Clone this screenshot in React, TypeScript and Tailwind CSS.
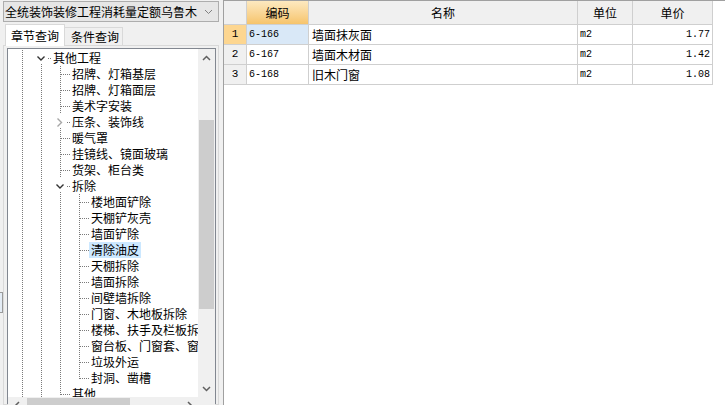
import React from 'react';

type Cell = 'pipe' | 'tee' | 'elbow' | 'open' | 'closed';

const P: Cell = 'pipe';

const rows: { label: string; cells: Cell[]; selected?: boolean }[] = [
  { label: '其他工程', cells: [P, 'open'] },
  { label: '招牌、灯箱基层', cells: [P, P, 'tee'] },
  { label: '招牌、灯箱面层', cells: [P, P, 'tee'] },
  { label: '美术字安装', cells: [P, P, 'tee'] },
  { label: '压条、装饰线', cells: [P, P, 'closed'] },
  { label: '暖气罩', cells: [P, P, 'tee'] },
  { label: '挂镜线、镜面玻璃', cells: [P, P, 'tee'] },
  { label: '货架、柜台类', cells: [P, P, 'tee'] },
  { label: '拆除', cells: [P, P, 'open'] },
  { label: '楼地面铲除', cells: [P, P, P, 'tee'] },
  { label: '天棚铲灰壳', cells: [P, P, P, 'tee'] },
  { label: '墙面铲除', cells: [P, P, P, 'tee'] },
  { label: '清除油皮', cells: [P, P, P, 'tee'], selected: true },
  { label: '天棚拆除', cells: [P, P, P, 'tee'] },
  { label: '墙面拆除', cells: [P, P, P, 'tee'] },
  { label: '间壁墙拆除', cells: [P, P, P, 'tee'] },
  { label: '门窗、木地板拆除', cells: [P, P, P, 'tee'] },
  { label: '楼梯、扶手及栏板拆除', cells: [P, P, P, 'tee'] },
  { label: '窗台板、门窗套、窗帘盒拆除', cells: [P, P, P, 'tee'] },
  { label: '垃圾外运', cells: [P, P, P, 'tee'] },
  { label: '封洞、凿槽', cells: [P, P, P, 'elbow'] },
  { label: '其他', cells: [P, P, 'elbow'] },
];

const dot = { stroke: '#7a7a7a', strokeWidth: 1, strokeDasharray: '1 1', shapeRendering: 'crispEdges' as const };

function Connector({ kind }: { kind: Cell }) {
  return (
    <svg width="19" height="16" className="shrink-0 block">
      {(kind === 'pipe' || kind === 'tee') && <line x1="9.5" y1="0" x2="9.5" y2="16" {...dot} />}
      {kind === 'elbow' && <line x1="9.5" y1="0" x2="9.5" y2="9" {...dot} />}
      {(kind === 'tee' || kind === 'elbow') && <line x1="10" y1="8.5" x2="19" y2="8.5" {...dot} />}
      {(kind === 'open' || kind === 'closed') && (
        <>
          <line x1="9.5" y1="14" x2="9.5" y2="16" {...dot} />
          <line x1="16" y1="8.5" x2="19" y2="8.5" {...dot} />
        </>
      )}
      {kind === 'open' && (
        <polyline points="5.5,6.5 9,10 12.5,6.5" fill="none" stroke="#333" strokeWidth="1.4" />
      )}
      {kind === 'closed' && (
        <polyline points="6.5,4.5 10.5,8.5 6.5,12.5" fill="none" stroke="#a6a6a6" strokeWidth="1.4" />
      )}
    </svg>
  );
}

function Chevron({ up, thin }: { up?: boolean; thin?: boolean }) {
  return (
    <svg width="9" height="6" className="block">
      <polyline
        points={up ? '1,5 4.5,1.5 8,5' : '1,1 4.5,4.5 8,1'}
        fill="none"
        stroke={thin ? '#808080' : '#606060'}
        strokeWidth={thin ? 1 : 1.5}
      />
    </svg>
  );
}

const cjk = "font-['Noto_Sans_CJK_SC','Noto_Sans',sans-serif]";
const mono = "font-['Liberation_Mono','DejaVu_Sans_Mono',monospace]";

const data = [
  { n: '1', code: '6-166', name: '墙面抹灰面', unit: 'm2', price: '1.77' },
  { n: '2', code: '6-167', name: '墙面木材面', unit: 'm2', price: '1.42' },
  { n: '3', code: '6-168', name: '旧木门窗', unit: 'm2', price: '1.08' },
];

const cols = 'grid grid-cols-[23px_62px_269px_55px_80px]';
const cellB = 'border-r border-b border-[#cfcfcf]';

export default function App() {
  return (
    <div className={`flex w-[725px] h-[405px] overflow-hidden bg-[#f0f0f0] text-[12px] leading-none text-black ${cjk}`}>
      {/* far left sliver */}
      <div className="w-[3px] shrink-0">
        <div className="mt-[292px] h-[21px] border-y border-r border-[#9a9a9a] bg-[#e4ecf5]" />
      </div>

      {/* left panel */}
      <div className="w-[216px] shrink-0 flex flex-col">
        <div className="mt-[1px] h-[21px] border border-[#adadad] bg-[#e6e6e6] flex items-center justify-between pl-[1px] pr-[5px]">
          <span className="whitespace-nowrap">全统装饰装修工程消耗量定额乌鲁木</span>
          <Chevron thin />
        </div>

        <div className="mt-[1px] h-[22px] flex items-end pl-[2px]">
          <div className="h-[22px] w-[60px] bg-white border border-b-0 border-[#d9d9d9] flex items-center pl-[5px] relative z-10 -mb-[1px]">
            章节查询
          </div>
          <div className="h-[18px] w-[58px] bg-[#f0f0f0] border border-l-0 border-b-0 border-[#d9d9d9] flex items-center pl-[6px] pt-[1px]">
            条件查询
          </div>
        </div>

        <div className="flex-1 border border-[#d9d9d9] bg-[#f0f0f0] pt-[2px] pl-[3px] pr-[2px] flex flex-col min-h-0">
          <div className="flex-1 border border-[#828790] bg-white flex flex-col min-h-0">
            <div className="h-[348px] flex shrink-0">
              <div className="flex-1 overflow-hidden pl-[5px] pt-[1px]">
                {rows.map((r, i) => (
                  <div key={i} className="h-4 flex items-center whitespace-nowrap">
                    {r.cells.map((c, j) => (
                      <Connector key={j} kind={c} />
                    ))}
                    <span className={`px-[2px] h-4 flex items-center ${r.selected ? 'bg-[#cce8ff]' : ''}`}>{r.label}</span>
                  </div>
                ))}
              </div>
              <div className="w-[17px] bg-[#f0f0f0] flex flex-col">
                <div className="h-[17px] flex items-center justify-center">
                  <Chevron up />
                </div>
                <div className="flex-1 px-[1px] pt-[54px]">
                  <div className="h-[189px] bg-[#cdcdcd]" />
                </div>
                <div className="h-[17px] flex items-center justify-center">
                  <Chevron />
                </div>
              </div>
            </div>
            <div className="h-[17px] flex bg-[#f0f0f0] shrink-0">
              <div className="w-[17px] flex items-center justify-center">
                <svg width="6" height="9" className="block">
                  <polyline points="5,1 1.5,4.5 5,8" fill="none" stroke="#606060" strokeWidth="1.5" />
                </svg>
              </div>
              <div className="flex-1 pt-[1px] pl-[2px]">
                <div className="w-[103px] h-[15px] bg-[#cdcdcd]" />
              </div>
              <div className="w-[17px] flex items-center justify-center">
                <svg width="6" height="9" className="block">
                  <polyline points="1,1 4.5,4.5 1,8" fill="none" stroke="#606060" strokeWidth="1.5" />
                </svg>
              </div>
              <div className="w-[17px]" />
            </div>
          </div>
        </div>
      </div>

      {/* splitter */}
      <div className="w-[4px] shrink-0" />

      {/* grid */}
      <div className="flex-1 bg-white border-l border-t border-[#a0a0a0] flex flex-col">
        <div className={`${cols} h-[24px]`}>
          <div className={`${cellB} bg-[#f0f0f0]`} />
          <div className={`${cellB} bg-gradient-to-b from-[#fde9c0] to-[#f6c46b] flex items-center justify-center`}>编码</div>
          <div className={`${cellB} bg-[#f0f0f0] flex items-center justify-center`}>名称</div>
          <div className={`${cellB} bg-[#f0f0f0] flex items-center justify-center`}>单位</div>
          <div className={`${cellB} bg-[#f0f0f0] flex items-center justify-center`}>单价</div>
        </div>
        {data.map((d, i) => (
          <div key={d.n} className={`${cols} h-[20px]`}>
            <div className={`${cellB} ${i === 0 ? 'bg-[#fdd690]' : 'bg-[#f0f0f0]'} flex items-center justify-center ${mono} text-[11px]`}>
              {d.n}
            </div>
            <div className={`${cellB} ${i === 0 ? 'bg-[#d9e8f7]' : ''} flex items-center pl-[2px] ${mono} text-[10px]`}>
              {d.code}
            </div>
            <div className={`${cellB} flex items-center pl-[3px]`}>{d.name}</div>
            <div className={`${cellB} flex items-center pl-[2px] ${mono} text-[10px]`}>{d.unit}</div>
            <div className={`${cellB} flex items-center justify-end pr-[2px] ${mono} text-[10px]`}>{d.price}</div>
          </div>
        ))}
      </div>
    </div>
  );
}
